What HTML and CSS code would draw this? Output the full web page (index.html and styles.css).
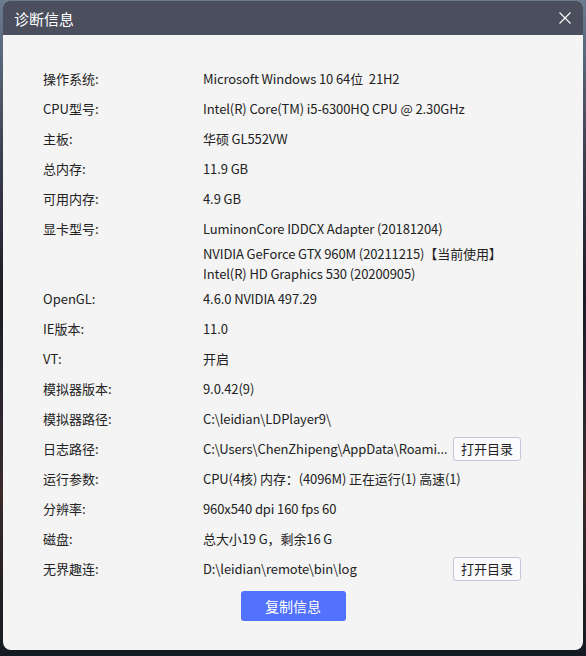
FILE: index.html
```html
<!DOCTYPE html>
<html lang="zh-CN">
<head>
<meta charset="utf-8">
<title>诊断信息</title>
<link rel="stylesheet" href="styles.css">
</head>
<body>
<div class="dialog">
  <div class="titlebar">
    <span class="title">诊断信息</span>
    <svg class="close" width="12" height="12" viewBox="0 0 12 12"><path d="M0.5 0.5 L11.5 11.5 M11.5 0.5 L0.5 11.5" stroke="#ffffff" stroke-width="1.1" fill="none"/></svg>
  </div>
  <div class="content">
    <div class="row"><div class="label">操作系统:</div><div class="value">Microsoft Windows 10 64位&nbsp;&nbsp;21H2</div></div>
    <div class="row"><div class="label">CPU型号:</div><div class="value">Intel(R) Core(TM) i5-6300HQ CPU @ 2.30GHz</div></div>
    <div class="row"><div class="label">主板:</div><div class="value">华硕 GL552VW</div></div>
    <div class="row"><div class="label">总内存:</div><div class="value">11.9 GB</div></div>
    <div class="row"><div class="label">可用内存:</div><div class="value">4.9 GB</div></div>
    <div class="row"><div class="label">显卡型号:</div>
      <div class="value multi">
        <div class="line first">LuminonCore IDDCX Adapter (20181204)</div>
        <div class="line">NVIDIA GeForce GTX 960M (20211215)【当前使用】</div>
        <div class="line">Intel(R) HD Graphics 530 (20200905)</div>
      </div>
    </div>
    <div class="row"><div class="label">OpenGL:</div><div class="value">4.6.0 NVIDIA 497.29</div></div>
    <div class="row"><div class="label">IE版本:</div><div class="value">11.0</div></div>
    <div class="row"><div class="label">VT:</div><div class="value">开启</div></div>
    <div class="row"><div class="label">模拟器版本:</div><div class="value">9.0.42(9)</div></div>
    <div class="row"><div class="label">模拟器路径:</div><div class="value">C:\leidian\LDPlayer9\</div></div>
    <div class="row"><div class="label">日志路径:</div><div class="value path">C:\Users\ChenZhipeng\AppData\Roami...</div><button class="open">打开目录</button></div>
    <div class="row"><div class="label">运行参数:</div><div class="value">CPU(4核) 内存：(4096M) 正在运行(1) 高速(1)</div></div>
    <div class="row"><div class="label">分辨率:</div><div class="value">960x540 dpi 160 fps 60</div></div>
    <div class="row"><div class="label">磁盘:</div><div class="value">总大小19 G，剩余16 G</div></div>
    <div class="row"><div class="label">无界趣连:</div><div class="value path">D:\leidian\remote\bin\log</div><button class="open">打开目录</button></div>
    <div class="actions"><button class="copy">复制信息</button></div>
  </div>
</div>
</body>
</html>
```

FILE: styles.css
```css
html, body {
  margin: 0;
  padding: 0;
}
body {
  width: 586px;
  height: 656px;
  overflow: hidden;
  background: linear-gradient(180deg, #6a7b90 0%, #3a3d4e 25%, #1c1a26 45%, #2a2430 60%, #3a2a2a 75%, #141a22 100%);
  font-family: "Microsoft YaHei", "Noto Sans CJK SC", sans-serif;
}
.dialog {
  margin: 1px 3px 0 3px;
  width: 580px;
  height: 649px;
  border-radius: 6px 6px 8px 8px;
  overflow: hidden;
  background: #f4f4f4;
  display: flex;
  flex-direction: column;
}
.titlebar {
  height: 34px;
  flex: none;
  background: #4a4e5d;
  display: flex;
  align-items: center;
  justify-content: space-between;
  padding: 0 12px 0 11px;
}
.title {
  color: #ffffff;
  font-size: 15px;
}
.close {
  display: block;
}
.content {
  padding: 29px 0 0 40px;
  color: #222222;
  font-size: 13px;
}
.row {
  display: flex;
  align-items: flex-start;
  min-height: 30px;
  line-height: 30px;
}
.label {
  width: 160px;
  flex: none;
}
.value {
  white-space: nowrap;
  letter-spacing: -0.1px;
}
.value.path {
  width: 250px;
  overflow: hidden;
}
.multi .line {
  line-height: 20px;
}
.multi .line.first {
  line-height: 30px;
}
.open {
  margin-top: 3px;
  width: 68px;
  height: 24px;
  padding: 0;
  border: 1px solid #c4c7d9;
  border-radius: 3px;
  background: #fbfbfd;
  color: #222222;
  font-family: inherit;
  font-size: 13px;
  line-height: 22px;
}
.actions {
  display: flex;
  justify-content: center;
  padding-top: 7px;
  margin-left: -40px;
}
.copy {
  width: 105px;
  height: 30px;
  padding: 0;
  border: none;
  border-radius: 3px;
  background: #5271fc;
  color: #ffffff;
  font-family: inherit;
  font-size: 14px;
}
```
